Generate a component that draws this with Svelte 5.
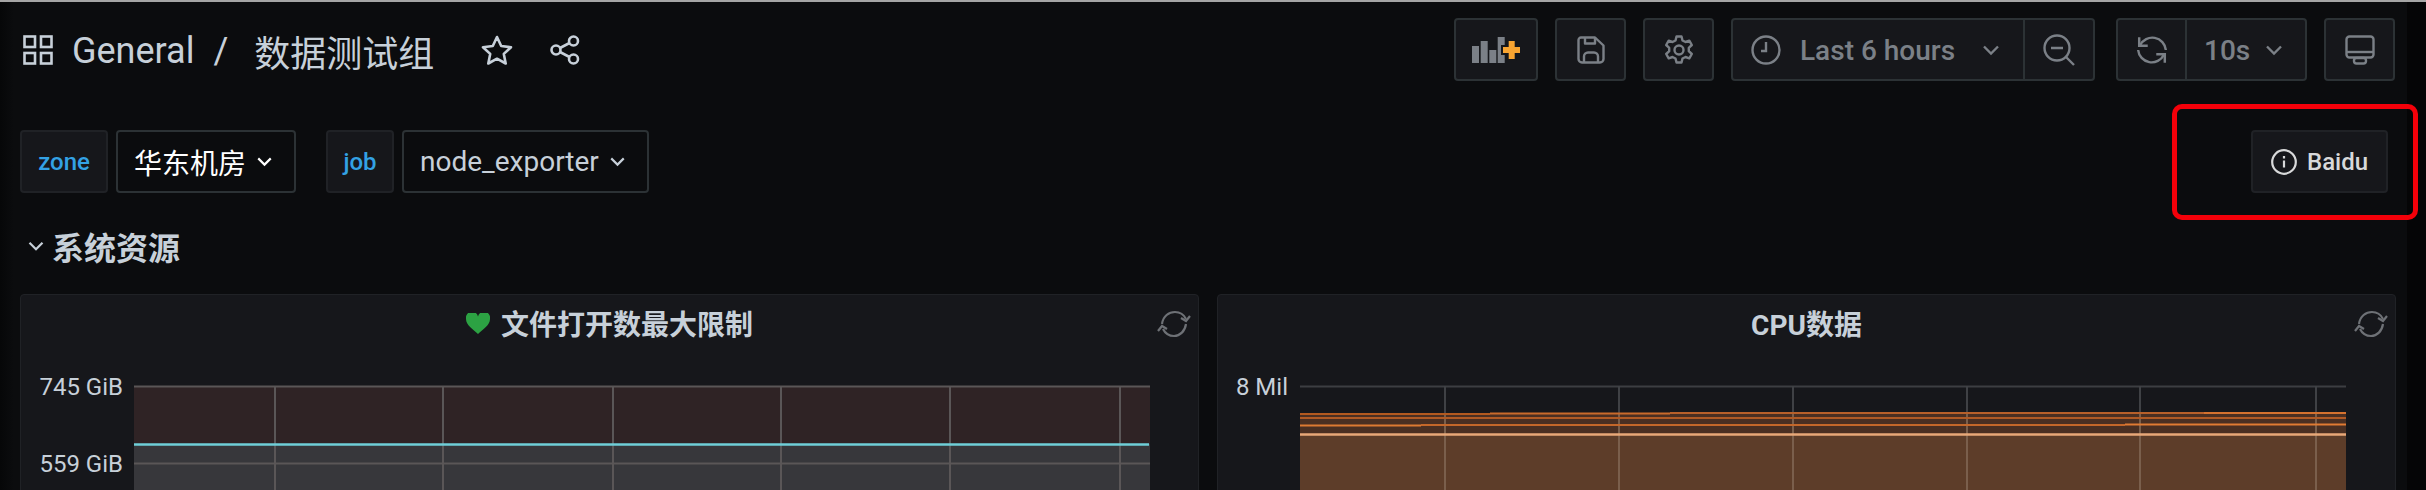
<script lang="ts">
	const gridA = [275, 443, 613, 781, 950, 1120];
	const gridB = [1445, 1619, 1793, 1967, 2140, 2316];

	// cpu series, values step a little over the range
	const cpuLines = [
		{ x1: 1300, x2: 1490, y: 414, color: '#b3591f' },
		{ x1: 1490, x2: 1670, y: 413.5, color: '#c96a2b' },
		{ x1: 1670, x2: 2204, y: 413, color: '#b8602a' },
		{ x1: 2204, x2: 2346, y: 413, color: '#d5722f' },
		{ x1: 1300, x2: 2346, y: 418, color: '#b05a25' },
		{ x1: 1300, x2: 1421, y: 425.5, color: '#dd7a32' },
		{ x1: 1421, x2: 2125, y: 425, color: '#c4672a' },
		{ x1: 2125, x2: 2346, y: 424.5, color: '#e07b33' }
	];
</script>

{#snippet chevron(size = 20)}
	<svg class="chevron" width={size} height={size} viewBox="0 0 20 20" fill="none" stroke="currentColor" stroke-width="1.7">
		<path d="M5 7.500l5 5 5-5" />
	</svg>
{/snippet}

{#snippet syncIcon()}
	<svg class="sync" width="34" height="28" viewBox="0 0 34 28" fill="none" stroke="#6e7176" stroke-width="2.2">
		<path d="M5 14C6 6 12 2 18 2c5 0 9 3 11 7" />
		<path d="M29 14c-1 7-6 12-12 12-5 0-9-3-11-7" />
		<path d="M33 6l-4 5-5-3" />
		<path d="M1 21l4-5 5 3" />
	</svg>
{/snippet}

<div class="page">
	<header class="topbar">
		<div class="crumbs">
			<svg width="30" height="30" viewBox="0 0 30 30" fill="none" stroke="#c7d0d9" stroke-width="2.6">
				<rect x="1.500" y="1.500" width="10.500" height="10.500" />
				<rect x="18" y="1.500" width="10.500" height="10.500" />
				<rect x="1.500" y="18" width="10.500" height="10.500" />
				<rect x="18" y="18" width="10.500" height="10.500" />
			</svg>
			<span class="folder">General</span>
			<span class="slash">/</span>
			<span class="dash-name">数据测试组</span>
			<svg class="star" width="32" height="30" viewBox="0 0 32 30" fill="none" stroke="#c7d0d9" stroke-width="2.6" stroke-linejoin="round">
				<path d="M16 2l4.200 9 9.800 1.200-7.200 6.700 1.900 9.600L16 23.700l-8.700 4.800 1.900-9.600L2 12.200 11.800 11z" />
			</svg>
			<svg class="share" width="30" height="30" viewBox="0 0 30 30" fill="none" stroke="#c7d0d9" stroke-width="2.6">
				<circle cx="23.500" cy="6" r="4.500" />
				<circle cx="6" cy="15" r="4.500" />
				<circle cx="23.500" cy="24" r="4.500" />
				<path d="M10 13l9.500-5M10 17l9.500 5" />
			</svg>
		</div>
		<div class="actions">
			<button class="btn add" type="button" aria-label="Add panel">
				<svg width="48" height="26" viewBox="0 0 48 26">
					<g fill="#7b8087">
						<rect x="0" y="9" width="7" height="17" />
						<rect x="8.700" y="4" width="7" height="22" />
						<rect x="17.300" y="13" width="7" height="13" />
						<rect x="25.700" y="0" width="7" height="26" />
					</g>
					<path class="plus-halo" d="M36.700 4h6v6H48v6h-5.300v6h-6v-6H31v-6h5.700z" />
					<path d="M36.700 4h6v6H48v6h-5.300v6h-6v-6H31v-6h5.700z" fill="#f9a531" />
				</svg>
			</button>
			<button class="btn" type="button" aria-label="Save">
				<svg width="28" height="28" viewBox="0 0 28 28" fill="none" stroke="#7b8087" stroke-width="2.400" stroke-linejoin="round">
					<path d="M4 1.500h14l8.500 8V23a3.500 3.500 0 0 1-3.500 3.500H5A3.500 3.500 0 0 1 1.500 23V4A2.500 2.500 0 0 1 4 1.500z" />
					<path d="M8 1.500v6h10v-6" />
					<path d="M7 26.500v-6a4 4 0 0 1 4-4h6a4 4 0 0 1 4 4v6" />
				</svg>
			</button>
			<button class="btn" type="button" aria-label="Settings">
				<svg width="30" height="30" viewBox="0 0 30 30" fill="none" stroke="#7b8087" stroke-width="2.400" stroke-linejoin="round">
					<circle cx="15" cy="15" r="4.500" />
					<path d="M12.500 1.500h5l1 4 3 1.500 3.800-1.300 2.500 4.300-3 2.800v3.400l3 2.800-2.500 4.300-3.800-1.300-3 1.500-1 4h-5l-1-4-3-1.500-3.800 1.300-2.500-4.300 3-2.800v-3.400l-3-2.800 2.500-4.300L8.500 7l3-1.500z" />
				</svg>
			</button>
			<div class="btn-group">
				<button class="btn time" type="button">
					<svg width="30" height="30" viewBox="0 0 30 30" fill="none" stroke="#7b8087" stroke-width="2.400">
						<circle cx="15" cy="15" r="13.500" />
						<path d="M15 7v9h-5" />
					</svg>
					<span>Last 6 hours</span>
					{@render chevron(28)}
				</button>
				<button class="btn zoom" type="button" aria-label="Zoom out">
					<svg width="32" height="32" viewBox="0 0 32 32" fill="none" stroke="#7b8087" stroke-width="2.400">
						<circle cx="14" cy="14" r="12.500" />
						<path d="M8 14h12M23 23l8 8" />
					</svg>
				</button>
			</div>
			<div class="btn-group refresh-group">
				<button class="btn refresh" type="button" aria-label="Refresh">
					<svg width="32" height="32" viewBox="0 0 30 30" fill="none" stroke="#7b8087" stroke-width="2.300">
						<path d="M3 3v8h8" />
						<path d="M3.800 10.500A12.800 12.800 0 0 1 28 15" />
						<path d="M27 27v-8h-8" />
						<path d="M26.200 19.500A12.800 12.800 0 0 1 2 15" />
					</svg>
				</button>
				<button class="btn interval" type="button">
					<span>10s</span>
					{@render chevron(28)}
				</button>
			</div>
			<button class="btn" type="button" aria-label="Cycle view mode">
				<svg width="30" height="30" viewBox="0 0 30 30" fill="none" stroke="#7b8087" stroke-width="2.400" stroke-linejoin="round">
					<rect x="1.500" y="1.500" width="27" height="21" rx="3" />
					<path d="M1.500 17h27" />
					<rect x="9" y="23" width="12" height="5.500" rx="2.500" />
				</svg>
			</button>
		</div>
	</header>

	<section class="submenu">
		<div class="vars">
			<span class="var-label zone">zone</span>
			<button class="var-value cjk" type="button">华东机房{@render chevron(25)}</button>
			<span class="var-label job">job</span>
			<button class="var-value" type="button">node_exporter{@render chevron(25)}</button>
		</div>
		<div class="links">
			<button class="link" type="button">
				<svg width="26" height="26" viewBox="0 0 26 26" fill="none" stroke="#d8d9da" stroke-width="2.200">
					<circle cx="13" cy="13" r="11.800" />
					<path d="M13 11.500v7M13 7v2.400" />
				</svg>
				Baidu
			</button>
			<div class="callout"></div>
		</div>
	</section>

	<div class="row-title">
		{@render chevron(26)}
		<span>系统资源</span>
	</div>

	<div class="panels">
		<article class="panel">
			<div class="panel-head">
				<h2>
					<svg width="24" height="21" viewBox="0 0 24 21"><path d="M12 21C7 16.500 0 12 0 6a6 6 0 0 1 12-2.500A6 6 0 0 1 24 6c0 6-7 10.500-12 15z" fill="#2ca243" /></svg>
					文件打开数最大限制
				</h2>
				{@render syncIcon()}
			</div>
			<svg class="chart" viewBox="21 366 1177 124" height="124">
				<rect x="134" y="386" width="1016" height="58" fill="#2f2325" />
				<rect x="134" y="444" width="1016" height="46" fill="#37373b" />
				<path d="M134 386.500H1150M134 463.500H1150" stroke="#5a5657" stroke-width="2" />
				{#each gridA as x}
					<path d="M{x} 386V490" stroke="#5a5657" stroke-width="2" />
				{/each}
				<path d="M134 444.500H1149" stroke="#6fcfd8" stroke-width="2.500" />
				<text class="tick" x="123" y="395" text-anchor="end">745 GiB</text>
				<text class="tick" x="123" y="472" text-anchor="end">559 GiB</text>
			</svg>
		</article>
		<article class="panel">
			<div class="panel-head">
				<h2>CPU数据</h2>
				{@render syncIcon()}
			</div>
			<svg class="chart" viewBox="1218 366 1177 124" height="124">
				<rect x="1300" y="414" width="1046" height="21" fill="#4a2f22" />
				<rect x="1300" y="435" width="1046" height="55" fill="#5d3d29" />
				<path d="M1300 386.500H2346" stroke="#3c3e42" stroke-width="2" />
				{#each gridB as x}
					<path d="M{x} 386V414" stroke="#3f4145" stroke-width="2" />
					<path d="M{x} 414V490" stroke="#7a5f4c" stroke-width="2" />
				{/each}
				{#each cpuLines as line}
					<path d="M{line.x1} {line.y}H{line.x2}" stroke={line.color} stroke-width="2" />
				{/each}
				<path d="M1300 434.500H2346" stroke="#e8a878" stroke-width="2.500" />
				<text class="tick" x="1288" y="395" text-anchor="end">8 Mil</text>
			</svg>
		</article>
	</div>
</div>

<style>
	:global(body) {
		margin: 0;
		background: #0b0c0e;
	}

	.page {
		width: 2426px;
		height: 490px;
		box-sizing: border-box;
		overflow: hidden;
		border-top: 2px solid #a5a5a5;
		background: linear-gradient(90deg, #060708 0, #0b0c0e 14px, #0b0c0e 2407px, #050506 2407px);
		color: #c7d0d9;
		font-family: Roboto, "Noto Sans CJK SC", sans-serif;
	}

	button {
		font: inherit;
	}

	.topbar {
		display: flex;
		justify-content: space-between;
		align-items: center;
		height: 63px;
		margin-top: 16px;
		padding: 0 31px 0 23px;
	}

	.crumbs {
		display: flex;
		align-items: center;
		font-size: 36px;
	}

	.crumbs span {
		padding-top: 2px;
	}

	.folder {
		margin-left: 19px;
	}

	.slash {
		margin-left: 19px;
	}

	.dash-name {
		margin-left: 26px;
	}

	.star {
		margin-left: 47px;
	}

	.share {
		margin-left: 37px;
	}

	.actions {
		display: flex;
		gap: 17px;
	}

	.btn {
		display: flex;
		align-items: center;
		justify-content: center;
		box-sizing: border-box;
		width: 71px;
		height: 63px;
		padding: 0;
		border: 2px solid #2c3235;
		border-radius: 4px;
		background: #16171b;
		color: #7b8087;
		font-size: 28px;
		font-weight: 500;
	}

	.btn.add {
		width: 84px;
	}

	.plus-halo {
		fill: #16171b;
		stroke: #16171b;
		stroke-width: 4px;
	}

	.btn-group {
		display: flex;
	}

	.refresh-group {
		margin-left: 4px;
	}

	.btn-group .btn:first-child {
		border-radius: 4px 0 0 4px;
	}

	.btn-group .btn:last-child {
		border-left: none;
		border-radius: 0 4px 4px 0;
	}

	.btn span {
		padding-top: 2px;
	}

	.btn.time {
		justify-content: flex-start;
		width: 294px;
		padding-left: 18px;
		gap: 19px;
	}

	.time .chevron {
		margin-left: 3px;
	}

	.btn.zoom {
		width: 70px;
	}

	.btn.interval {
		justify-content: flex-start;
		width: 120px;
		padding-left: 17px;
		gap: 10px;
	}

	.submenu {
		display: flex;
		justify-content: space-between;
		margin-top: 49px;
		padding: 0 38px 0 20px;
	}

	.vars {
		display: flex;
		align-items: stretch;
		height: 63px;
	}

	.var-label {
		display: flex;
		align-items: center;
		justify-content: center;
		box-sizing: border-box;
		border: 2px solid #202226;
		border-radius: 4px;
		background: #16171b;
		color: #33a2e5;
		font-size: 24px;
		font-weight: 500;
	}

	.var-label.zone {
		width: 88px;
	}

	.var-label.job {
		width: 68px;
		margin-left: 30px;
	}

	.var-value {
		display: flex;
		align-items: center;
		gap: 6px;
		box-sizing: border-box;
		margin-left: 8px;
		padding: 0 17px 0 16px;
		border: 2px solid #2c3235;
		border-radius: 4px;
		background: #0b0c0e;
		color: #c7d0d9;
		font-size: 28px;
	}

	.var-value.cjk {
		color: #fff;
	}

	.links {
		position: relative;
		display: flex;
	}

	.link {
		display: flex;
		align-items: center;
		gap: 10px;
		box-sizing: border-box;
		width: 137px;
		height: 63px;
		padding: 0 0 0 18px;
		border: 2px solid #202226;
		border-radius: 4px;
		background: #16171b;
		color: #d8d9da;
		font-size: 24px;
		font-weight: 500;
	}

	.callout {
		position: absolute;
		left: -79px;
		top: -26px;
		width: 246px;
		height: 116px;
		box-sizing: border-box;
		border: 5px solid #f40009;
		border-radius: 10px;
	}

	.row-title {
		display: flex;
		align-items: center;
		gap: 3px;
		box-sizing: border-box;
		height: 50px;
		margin-top: 29px;
		padding: 0 0 2px 23px;
		font-size: 32px;
		font-weight: 700;
	}

	.panels {
		display: grid;
		grid-template-columns: 1179px 1179px;
		gap: 18px;
		margin-top: 22px;
		padding-left: 20px;
	}

	.panel {
		height: 400px;
		box-sizing: border-box;
		border: 1px solid #202226;
		border-radius: 4px;
		background: #16171b;
	}

	.panel-head {
		position: relative;
		height: 71px;
		box-sizing: border-box;
		padding-top: 10px;
	}

	h2 {
		display: flex;
		align-items: center;
		justify-content: center;
		gap: 11px;
		height: 36px;
		margin: 0;
		font-size: 28px;
		font-weight: 700;
	}

	.sync {
		position: absolute;
		right: 7px;
		top: 15px;
	}

	.chart {
		display: block;
		width: 100%;
	}

	.tick {
		fill: #c7d0d9;
		font-size: 24px;
	}
</style>
